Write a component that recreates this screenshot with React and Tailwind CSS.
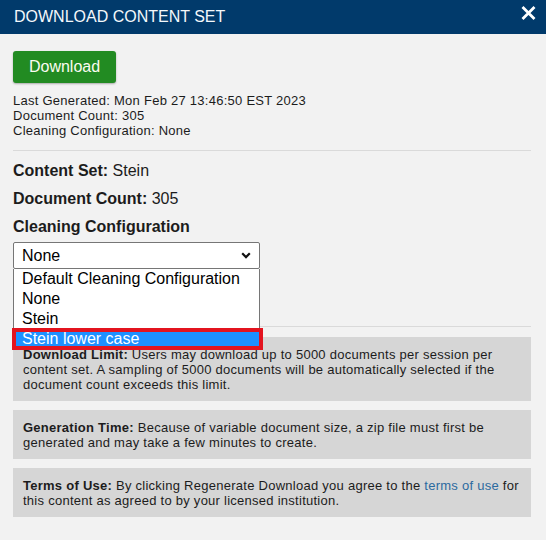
import React from "react";

export default function App() {
  return (
    <div className="w-[546px] h-[540px] bg-[#f2f2f2] font-['Liberation_Sans',Arial,sans-serif] text-[#1c1c1c] overflow-hidden">
      <header className="h-[34px] bg-[#013a6b] flex justify-between pl-[14px] pr-[10px]">
        <h1 className="self-center text-[16px] leading-none text-[#f4f8fb]">DOWNLOAD CONTENT SET</h1>
        <svg className="mt-[6px]" width="15" height="14" viewBox="0 0 15 14" aria-label="Close">
          <path d="M1.5 1 L13.5 13 M13.5 1 L1.5 13" stroke="#ffffff" strokeWidth="2.8" strokeLinecap="butt" />
        </svg>
      </header>

      <main className="pl-[13px] pr-[15px] pt-[17px]">
        <button className="h-[32px] w-[103px] bg-[#228b22] text-[#fbfbf0] text-[16px] leading-none rounded-[3px] shadow-[0_1px_2px_rgba(0,0,0,0.3)]">
          Download
        </button>

        <div className="mt-[10px] text-[13px] leading-[15px] tracking-[0.26px]">
          <div>Last Generated: Mon Feb 27 13:46:50 EST 2023</div>
          <div>Document Count: 305</div>
          <div>Cleaning Configuration: None</div>
        </div>

        <div className="mt-[12px] h-px bg-[#dadada]" />

        <div className="mt-[10px] flex flex-col gap-[8px] text-[16px] leading-[20px]">
          <div>
            <span className="font-bold">Content Set:</span> Stein
          </div>
          <div>
            <span className="font-bold">Document Count:</span> 305
          </div>
          <div className="font-bold">Cleaning Configuration</div>
        </div>

        <div className="relative mt-[5px] w-[247px] z-10">
          <div className="h-[27px] bg-white border border-[#767676] rounded-[2px] flex items-center justify-between pl-[8px] pr-[8px] text-[16px] text-black">
            <span>None</span>
            <svg width="10" height="7" viewBox="0 0 10 7">
              <path d="M1.2 1.3 L5 5.1 L8.8 1.3" fill="none" stroke="#111" strokeWidth="2.2" />
            </svg>
          </div>
          <div className="absolute left-0 top-[27px] w-[247px] bg-white border border-t-0 border-[#767676] text-[16px] leading-[20px] text-black">
            <div className="h-[20px] pl-[8px]">Default Cleaning Configuration</div>
            <div className="h-[20px] pl-[8px]">None</div>
            <div className="h-[20px] pl-[8px]">Stein</div>
            <div className="h-[20px] pl-[8px] bg-[#1e90ff] text-white">Stein lower case</div>
            <div className="absolute left-[-2px] top-[59px] w-[251px] h-[22px] border-4 border-[#e3141f]" />
          </div>
        </div>

        <div className="mt-[57px] h-px bg-[#dadada]" />

        <div className="mt-[10px] flex flex-col gap-[9px] text-[13px] leading-[15px] tracking-[0.26px]">
          <div className="bg-[#d6d6d6] pl-[10px] pr-[6px] pt-[10px] pb-[9px]">
            <span className="font-bold">Download Limit:</span> Users may download up to 5000 documents per session per content set. A sampling of 5000 documents will be automatically selected if the document count exceeds this limit.
          </div>
          <div className="bg-[#d6d6d6] pl-[10px] pr-[6px] pt-[10px] pb-[9px]">
            <span className="font-bold">Generation Time:</span> Because of variable document size, a zip file must first be generated and may take a few minutes to create.
          </div>
          <div className="bg-[#d6d6d6] pl-[10px] pr-[6px] pt-[10px] pb-[9px]">
            <span className="font-bold">Terms of Use:</span> By clicking Regenerate Download you agree to the{" "}
            <a className="text-[#2c6a9f]">terms of use</a> for this content as agreed to by your licensed institution.
          </div>
        </div>
      </main>
    </div>
  );
}
